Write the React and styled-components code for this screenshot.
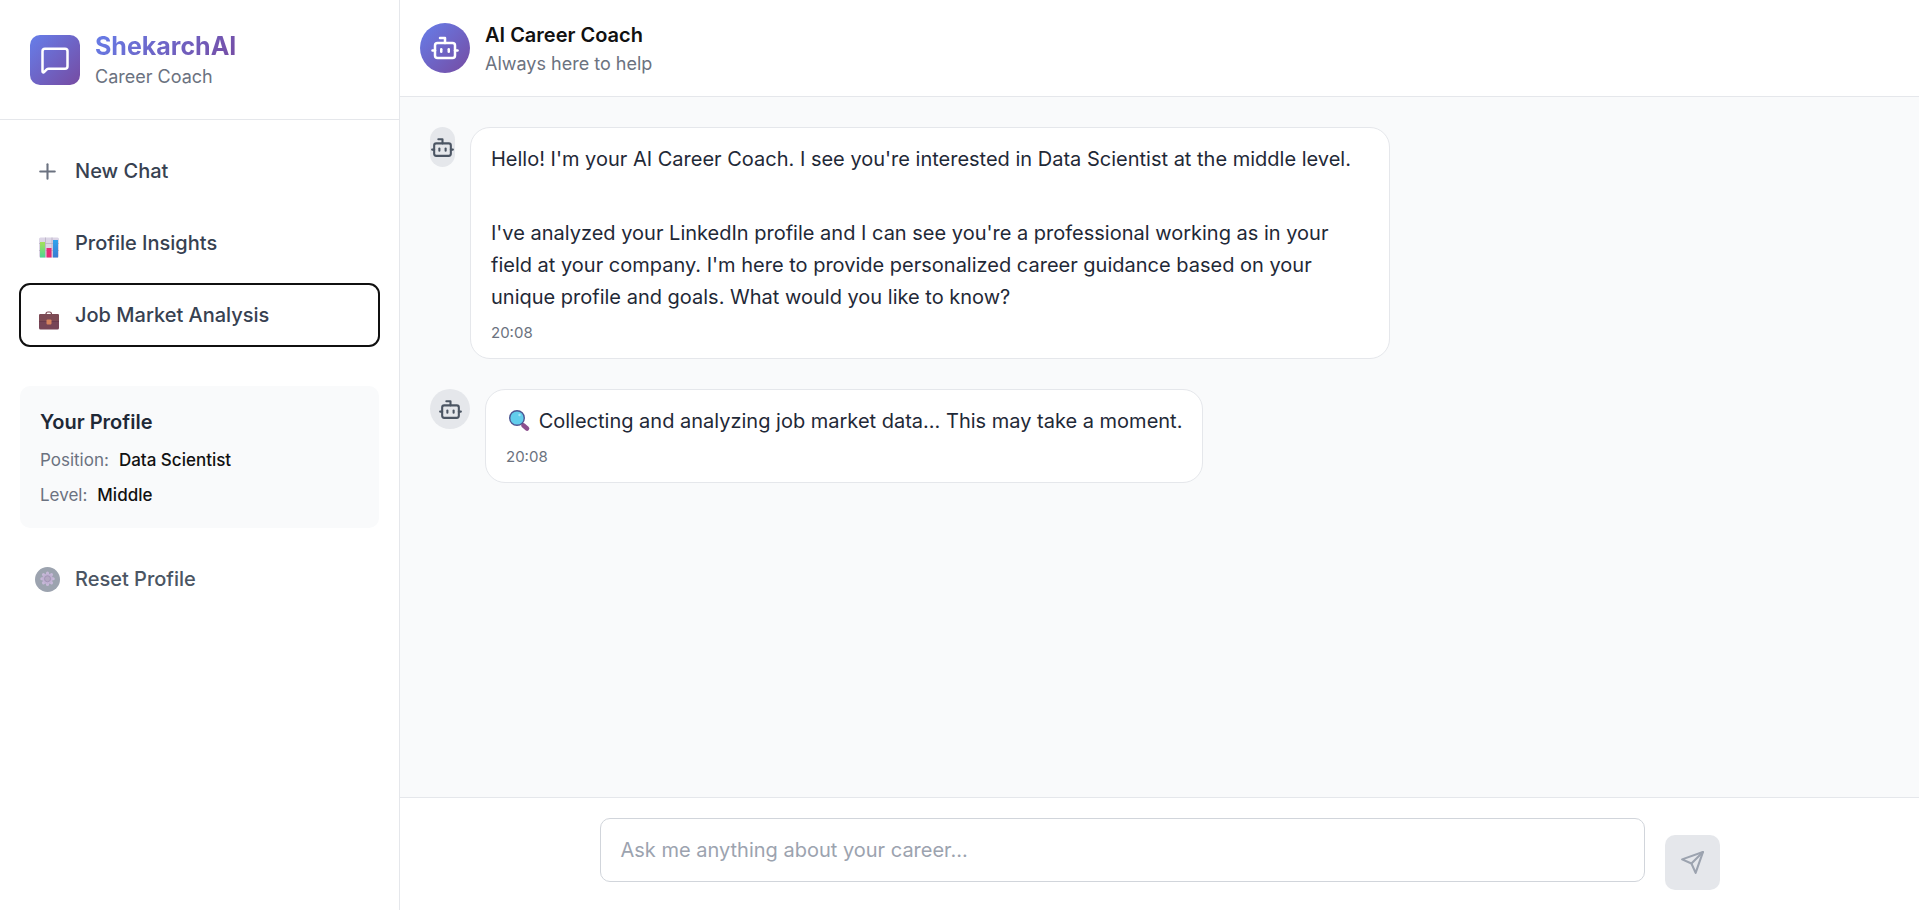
import React, { useState } from 'react';
import styled, { createGlobalStyle, css } from 'styled-components';
import { Bot, MessageSquare, Plus } from 'lucide-react';
import { FiSend } from 'react-icons/fi';

const colors = {
    ink: '#1f2937',
    text: '#374151',
    slate: '#4b5563',
    muted: '#6b7280',
    faint: '#9ca3af',
    border: '#e5e7eb',
    inputBorder: '#d1d5db',
    surface: '#f9fafb',
    gradient: 'linear-gradient(135deg, #667eea 0%, #764ba2 100%)',
};

const GlobalStyle = createGlobalStyle`
    * {
        box-sizing: border-box;
    }
    body {
        margin: 0;
        color: #111111;
        font-family: Inter, "Liberation Sans", sans-serif;
        font-size: 20px;
        line-height: 30px;
    }
    h1, h2, h3, p, dl, dd {
        margin: 0;
    }
    button, textarea {
        font: inherit;
    }
`
const Page = styled.div`
    display: flex;
    height: 100vh;
    background: white;
`
const Sidebar = styled.aside`
    width: 400px;
    flex-shrink: 0;
    border-right: 1px solid ${colors.border};
`
const Brand = styled.header`
    display: flex;
    align-items: center;
    gap: 15px;
    padding: 30px;
    border-bottom: 1px solid ${colors.border};
`
const Badge = styled.div`
    display: flex;
    align-items: center;
    justify-content: center;
    width: 50px;
    height: 50px;
    border-radius: ${props => props.$round ? '50%' : '10px'};
    background: ${colors.gradient};
    color: white;
`
const BrandName = styled.h1`
    margin-bottom: 2px;
    font-size: 25px;
    font-weight: 700;
    line-height: 32px;
    background: ${colors.gradient};
    background-clip: text;
    color: transparent;
`
const Subtitle = styled.p`
    font-size: 18px;
    line-height: 25px;
    color: ${colors.muted};
`
const Menu = styled.nav`
    display: flex;
    flex-direction: column;
    gap: 10px;
    padding: 20px;
`
const MenuButton = styled.button`
    display: flex;
    align-items: center;
    gap: 15px;
    width: 100%;
    height: 62px;
    padding: 0 15px;
    border: none;
    border-radius: 10px;
    background: transparent;
    color: ${props => props.$quiet ? colors.slate : colors.text};
    font-weight: 500;
    text-align: left;
    cursor: pointer;
    ${props => props.$active && css`
        outline: 2px solid #101010;
        outline-offset: -1px;
    `}
    svg {
        flex-shrink: 0;
        overflow: visible;
        color: ${colors.muted};
    }
`
const ProfileCard = styled.section`
    margin: 20px;
    padding: 20px;
    border-radius: 10px;
    background: ${colors.surface};
`
const ProfileTitle = styled.h3`
    margin-bottom: 10px;
    color: ${colors.ink};
    font-size: 20px;
    font-weight: 600;
    line-height: 32px;
`
const ProfileList = styled.dl`
    display: flex;
    flex-direction: column;
    gap: 10px;
    font-size: 17px;
    line-height: 25px;
`
const ProfileRow = styled.div`
    display: flex;
    gap: 10px;
    dt {
        color: ${colors.muted};
    }
    dd {
        font-weight: 500;
    }
`
const SidebarFooter = styled.div`
    padding: 0 20px;
`
const Main = styled.main`
    display: flex;
    flex: 1;
    flex-direction: column;
    min-width: 0;
`
const ChatHeader = styled.header`
    display: flex;
    align-items: center;
    gap: 15px;
    padding: 20px;
    border-bottom: 1px solid ${colors.border};
`
const ChatTitle = styled.h2`
    font-size: 20px;
    font-weight: 600;
    line-height: 31px;
`
const Messages = styled.div`
    display: flex;
    flex: 1;
    flex-direction: column;
    gap: 30px;
    padding: 30px;
    overflow-y: auto;
    background: ${colors.surface};
`
const MessageRow = styled.article`
    display: flex;
    align-items: flex-start;
    gap: 15px;
    max-width: 960px;
`
const Avatar = styled.div`
    display: flex;
    align-items: center;
    justify-content: center;
    flex-shrink: 0;
    width: ${props => props.$narrow ? 25 : 40}px;
    height: 40px;
    border-radius: 20px;
    background: ${colors.border};
    color: ${colors.slate};
`
const Bubble = styled.div`
    padding: 15px 20px;
    border: 1px solid ${colors.border};
    border-radius: 20px;
    background: white;
    color: ${colors.ink};
    line-height: 32px;
    p + p {
        margin-top: 42px;
    }
`
const Time = styled.time`
    display: block;
    margin-top: 10px;
    color: ${colors.muted};
    font-size: 15px;
    line-height: 20px;
`
const InlineGlass = styled.svg`
    width: 27px;
    height: 24px;
    vertical-align: -5px;
`
const Composer = styled.footer`
    padding: 20px;
    border-top: 1px solid ${colors.border};
`
const ComposerForm = styled.form`
    display: flex;
    align-items: flex-end;
    gap: 20px;
    max-width: 1120px;
    margin: 0 auto;
`
const Field = styled.div`
    display: flex;
    flex: 1;
    padding-bottom: 8px;
`
const TextBox = styled.textarea`
    width: 100%;
    height: 64px;
    padding: 15px 20px;
    border: 1px solid ${colors.inputBorder};
    border-radius: 10px;
    outline: none;
    line-height: 32px;
    resize: none;
    &::placeholder {
        color: ${colors.faint};
        opacity: 1;
    }
`
const SendButton = styled.button`
    display: flex;
    align-items: center;
    justify-content: center;
    width: 55px;
    height: 55px;
    padding: 0;
    border: none;
    border-radius: 10px;
    background: ${colors.border};
    color: ${colors.faint};
`

const ChartIcon = () => (
    <svg width="25" height="25" viewBox="0 0 25 25" aria-hidden="true">
        <defs>
            <linearGradient id="barGreen" x1="0" y1="0" x2="0" y2="1">
                <stop offset="0" stopColor="#a5e05a" />
                <stop offset="1" stopColor="#4fd493" />
            </linearGradient>
            <linearGradient id="barBlue" x1="0" y1="0" x2="0" y2="1">
                <stop offset="0" stopColor="#2fa4ee" />
                <stop offset="1" stopColor="#3b7bd0" />
            </linearGradient>
        </defs>
        <rect x="4" y="6.500" width="20" height="20" rx="1.500" fill="#dcd5e6" />
        <path d="M10.500 6.500v20M17 6.500v20M4 12.500h20M4 19.500h20" stroke="#b9b0c4" strokeWidth="0.800" />
        <rect x="5" y="11" width="5" height="15.500" fill="url(#barGreen)" />
        <rect x="11.500" y="17" width="5" height="9.500" fill="#e62a73" />
        <rect x="18" y="9" width="5" height="17.500" fill="url(#barBlue)" />
    </svg>
)

const BriefcaseIcon = () => (
    <svg width="25" height="25" viewBox="0 0 25 25" aria-hidden="true">
        <path d="M11 11.500v-0.500q0-2 2-2h1.500q2 0 2 2v0.500" fill="none" stroke="#7a4550" strokeWidth="1.200" />
        <rect x="4" y="11" width="20" height="15.500" rx="1.500" fill="#764556" />
        <path d="M4 12.500q0-1.500 1.500-1.500h17q1.500 0 1.500 1.500v6H4z" fill="#7d4a54" />
        <path d="M4 18.500h20" stroke="#66394a" strokeWidth="0.800" />
        <rect x="11.500" y="16.500" width="5" height="5" rx="1" fill="#d5825d" />
    </svg>
)

const GearIcon = () => (
    <svg width="25" height="25" viewBox="0 0 25 25" aria-hidden="true">
        <circle cx="12.500" cy="12.500" r="12.500" fill="#9ca3af" />
        <g stroke="#c6b8d8" strokeWidth="3" strokeLinecap="round">
            {[0, 45, 90, 135].map(angle => (
                <path key={angle} d="M12.500 6v11.500" transform={`rotate(${angle} 12.500 11.750)`} />
            ))}
        </g>
        <circle cx="12.500" cy="11.750" r="5.200" fill="#c0b1d2" />
        <circle cx="12.500" cy="11.750" r="3" fill="#b3a8c2" stroke="#a294b6" strokeWidth="1" />
    </svg>
)

const GlassIcon = () => (
    <InlineGlass viewBox="0 0 27 24" aria-hidden="true">
        <path d="M15.500 14l2.500 2.500" stroke="#6b4a78" strokeWidth="2" />
        <path d="M17.500 16.500l3.500 3" stroke="#8d4f8e" strokeWidth="4.600" strokeLinecap="round" />
        <circle cx="11" cy="9" r="7.300" fill="#62cdec" stroke="#4d5793" strokeWidth="1.400" />
        <circle cx="13.500" cy="6" r="1.200" fill="#a8e6f7" />
    </InlineGlass>
)

const menuItems = [
    { label: 'New Chat', icon: <Plus size={25} /> },
    { label: 'Profile Insights', icon: <ChartIcon /> },
    { label: 'Job Market Analysis', icon: <BriefcaseIcon />, active: true },
];

const profile = [
    { label: 'Position:', value: 'Data Scientist' },
    { label: 'Level:', value: 'Middle' },
];

const Message = ({ narrow, time, children }) => (
    <MessageRow>
        <Avatar $narrow={narrow}>
            <Bot size={25} />
        </Avatar>
        <Bubble>
            {children}
            <Time>{time}</Time>
        </Bubble>
    </MessageRow>
)

const App = () => {
    const [draft, setDraft] = useState('');

    return (
        <Page>
            <GlobalStyle />
            <Sidebar>
                <Brand>
                    <Badge>
                        <MessageSquare size={30} />
                    </Badge>
                    <div>
                        <BrandName>ShekarchAI</BrandName>
                        <Subtitle>Career Coach</Subtitle>
                    </div>
                </Brand>
                <Menu>
                    {menuItems.map(item => (
                        <MenuButton key={item.label} type="button" $active={item.active}>
                            {item.icon}
                            {item.label}
                        </MenuButton>
                    ))}
                </Menu>
                <ProfileCard>
                    <ProfileTitle>Your Profile</ProfileTitle>
                    <ProfileList>
                        {profile.map(row => (
                            <ProfileRow key={row.label}>
                                <dt>{row.label}</dt>
                                <dd>{row.value}</dd>
                            </ProfileRow>
                        ))}
                    </ProfileList>
                </ProfileCard>
                <SidebarFooter>
                    <MenuButton type="button" $quiet>
                        <GearIcon />
                        Reset Profile
                    </MenuButton>
                </SidebarFooter>
            </Sidebar>
            <Main>
                <ChatHeader>
                    <Badge $round>
                        <Bot size={30} />
                    </Badge>
                    <div>
                        <ChatTitle>AI Career Coach</ChatTitle>
                        <Subtitle>Always here to help</Subtitle>
                    </div>
                </ChatHeader>
                <Messages>
                    <Message time="20:08" narrow>
                        <p>
                            Hello! I'm your AI Career Coach. I see you're interested in Data Scientist at the
                            middle level.
                        </p>
                        <p>
                            I've analyzed your LinkedIn profile and I can see you're a professional working as
                            in your field at your company. I'm here to provide personalized career guidance
                            based on your unique profile and goals. What would you like to know?
                        </p>
                    </Message>
                    <Message time="20:08">
                        <p>
                            <GlassIcon /> Collecting and analyzing job market data... This may take a moment.
                        </p>
                    </Message>
                </Messages>
                <Composer>
                    <ComposerForm onSubmit={event => event.preventDefault()}>
                        <Field>
                            <TextBox
                                rows={1}
                                aria-label="Message"
                                placeholder="Ask me anything about your career..."
                                value={draft}
                                onChange={event => setDraft(event.target.value)}
                            />
                        </Field>
                        <SendButton type="submit" aria-label="Send" disabled={!draft.trim()}>
                            <FiSend size={25} />
                        </SendButton>
                    </ComposerForm>
                </Composer>
            </Main>
        </Page>
    );
}

export default App;
